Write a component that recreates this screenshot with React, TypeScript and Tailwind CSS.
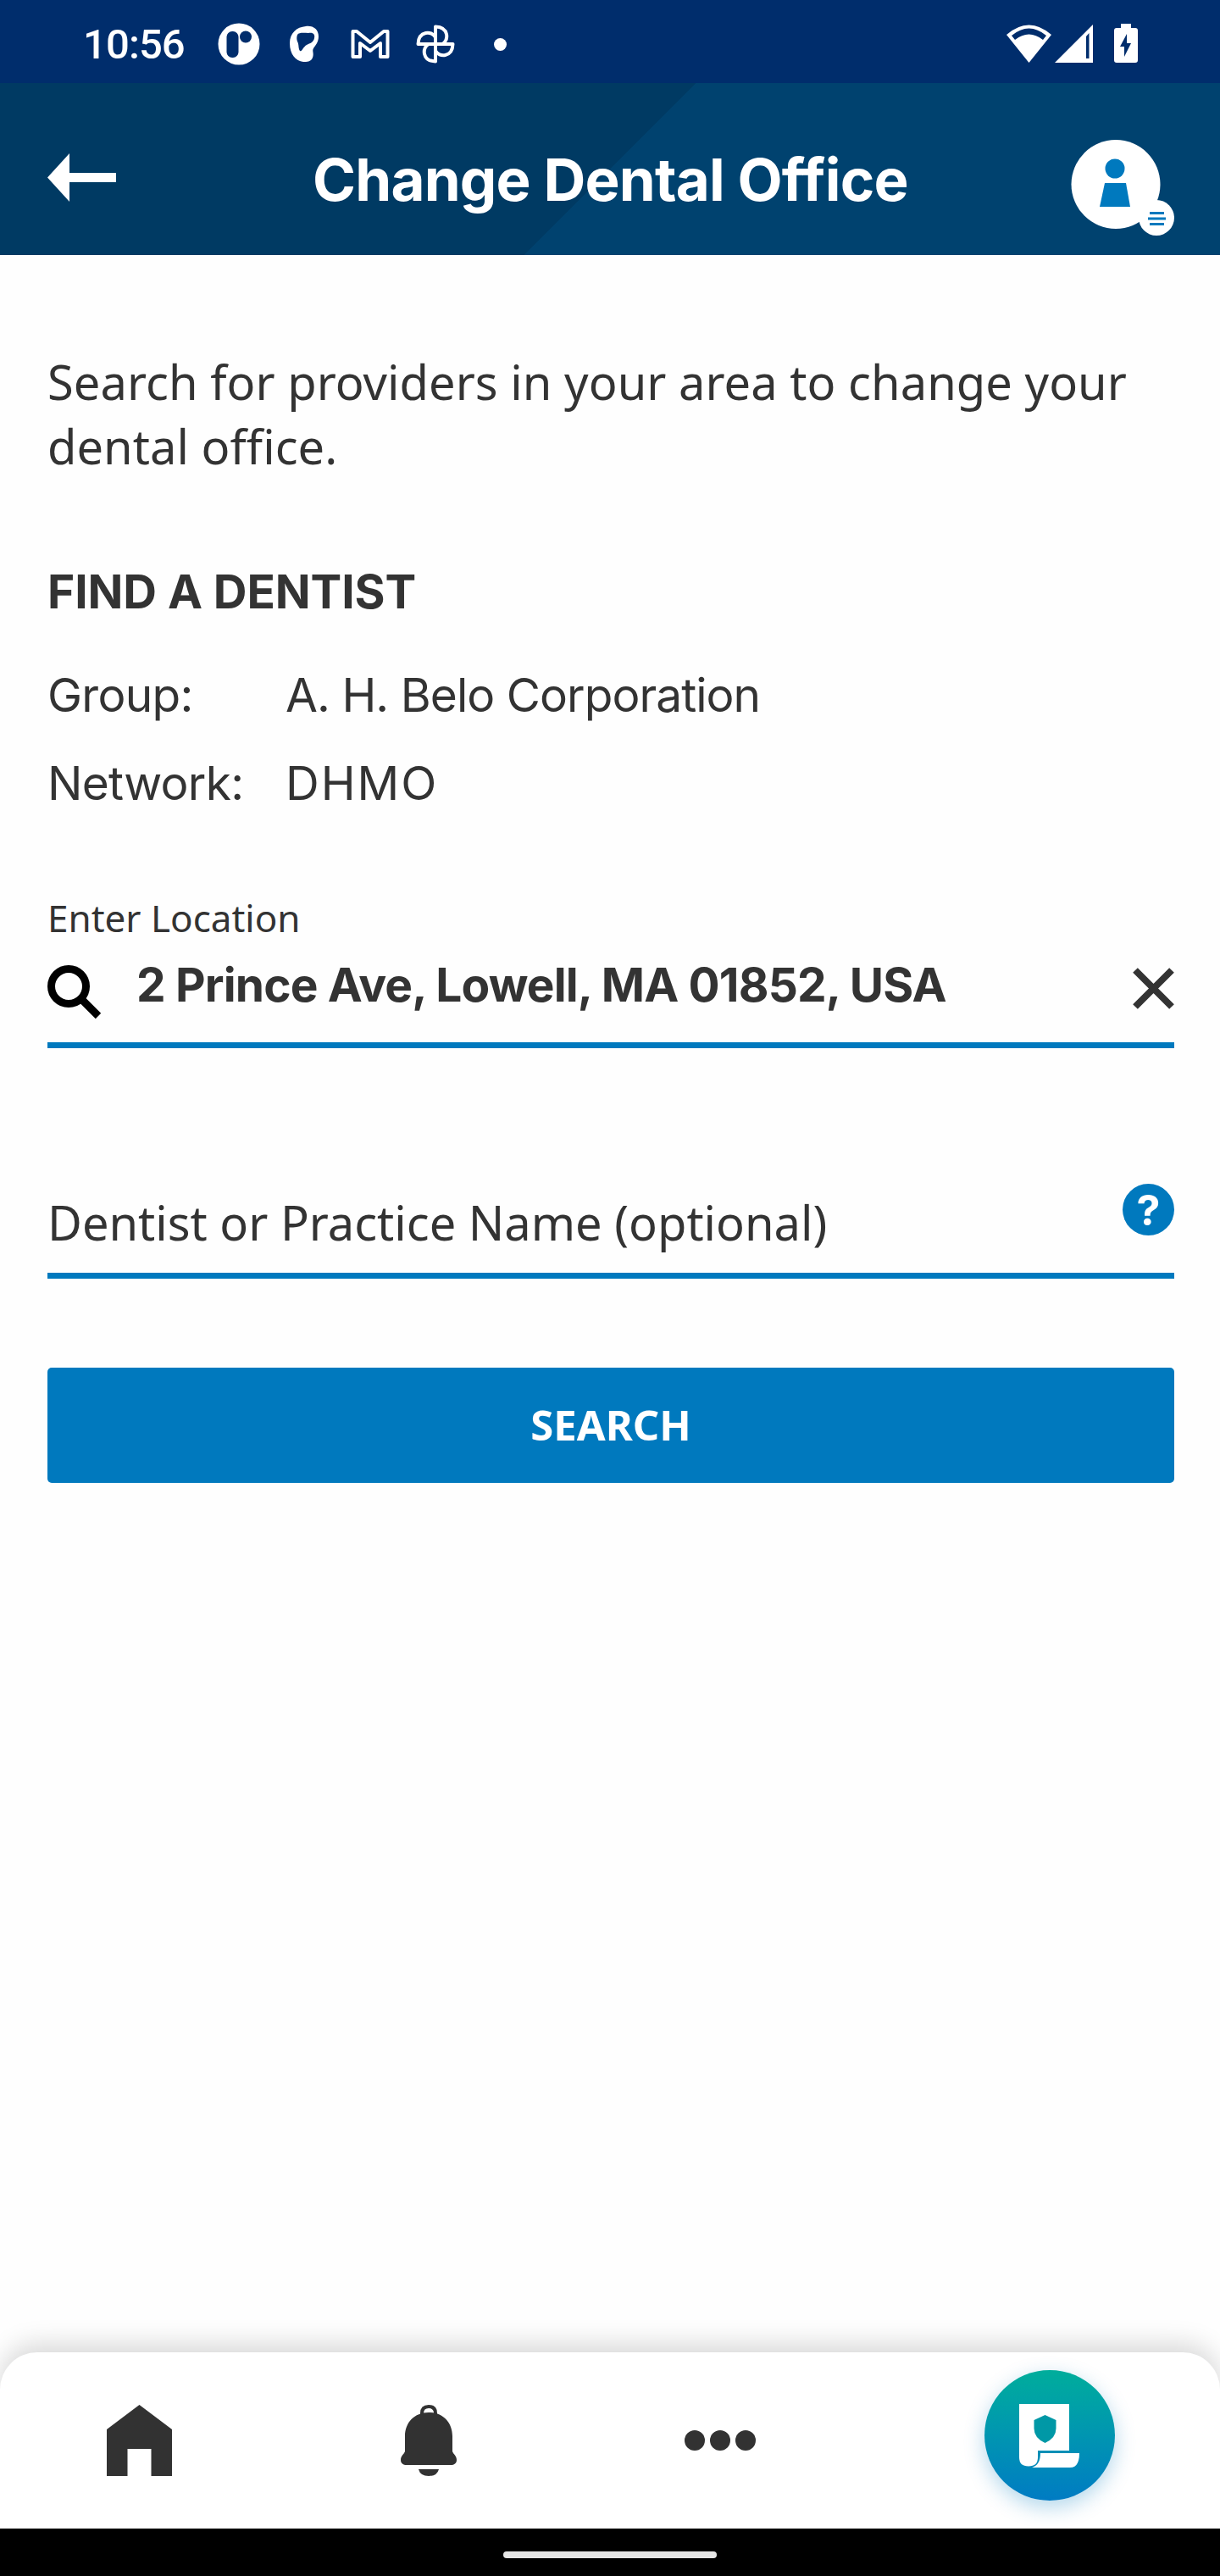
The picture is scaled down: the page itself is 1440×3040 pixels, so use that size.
import React from "react";

function StatusBar() {
  return (
    <div className="flex h-[98px] items-center justify-between bg-[#002d6c] text-white">
      <div className="flex items-center pl-[98px] pt-[6px]">
        <span className="w-[120px] whitespace-nowrap font-['Roboto'] text-[49px] font-medium leading-none tracking-[-0.9px]">10:56</span>
        <svg className="ml-[39px]" width="50" height="50" viewBox="0 0 50 50">
          <circle cx="25" cy="25" r="24.5" fill="#fff" />
          <rect x="10.500" y="10" width="14" height="31" rx="6.500" fill="#002d6c" />
          <circle cx="33" cy="16.500" r="7" fill="#002d6c" />
        </svg>
        <svg className="ml-[34px]" width="36" height="44" viewBox="0 0 36 44">
          <path d="M20 1C29 0 35 5 35 13C35 20 31 24 29 27C27 30 30 33 28 38C26 43 21 43 17 43C8 42 1 34 1 21C1 9 9 2 20 1Z" fill="#fff" />
          <path d="M10 11C12 8 18 9 23 9C29 8 31 11 30 15C29 20 25 21 21 23C17 25 15 32 13 30C11 28 12 22 10 19C9 16 9 14 10 11Z" fill="#002d6c" />
        </svg>
        <svg className="ml-[37px]" width="46" height="36" viewBox="0 0 46 36" fill="none" stroke="#fff" strokeWidth="4" strokeLinejoin="round">
          <path d="M2.500 33V3H7L23 16L39 3H43.500V33H35V17L23 26L11 17V33Z" />
        </svg>
        <svg className="ml-[31px]" width="46" height="46" viewBox="0 0 46 46" fill="none" stroke="#fff" strokeWidth="4" strokeLinejoin="round">
          <path d="M23 23V2.500C39 3 39 19 31 23M23 23H43.500C43 39 27 39 23 31M23 23V43.500C7 43 7 27 15 23M23 23H2.500C3 7 19 7 23 15" />
        </svg>
        <span className="ml-[46px] h-[15px] w-[15px] rounded-full bg-white" />
      </div>
      <div className="flex items-center pr-[97px] pt-[4px]">
        <svg width="53" height="45" viewBox="0 0 53 45">
          <path d="M0 12Q26.500 -11 53 12L26.500 45Z" fill="#fff" />
          <path d="M6 13Q26.500 -4 47 13L43 18Q26.500 5 10 18Z" fill="#002d6c" />
        </svg>
        <svg className="ml-[4px]" width="45" height="45" viewBox="0 0 45 45">
          <path d="M45 0V45H0Z" fill="#fff" />
          <path d="M37 14L40.500 10V40H37Z" fill="#002d6c" />
        </svg>
        <svg className="ml-[25px]" width="28" height="46" viewBox="0 0 28 46">
          <path d="M8 0H20V5H25Q28 5 28 8V43Q28 46 25 46H3Q0 46 0 43V8Q0 5 3 5H8Z" fill="#fff" />
          <path d="M15 12V23H20L12 39V27H7Z" fill="#002d6c" />
        </svg>
      </div>
    </div>
  );
}

function Header() {
  return (
    <header className="flex h-[203px] bg-[linear-gradient(135deg,#003a63_0%,#003a63_50%,#00426f_50%,#00426f_100%)] pl-14 pr-[54px] text-white">
      <svg className="mt-[83px]" width="82" height="57" viewBox="0 0 82 57" fill="#fff">
        <path d="M0 28.500L26 0V23H81V34H26V57Z" />
      </svg>
      <h1 className="ml-[231px] mt-[72px] whitespace-nowrap font-['Inter'] text-[69px] font-bold leading-[84px] tracking-[-0.8px]">Change Dental Office</h1>
      <svg className="ml-auto mt-[67px]" width="122" height="113" viewBox="0 0 122 113">
        <circle cx="53" cy="52.500" r="52.500" fill="#fff" />
        <circle cx="52" cy="34" r="11.500" fill="#0079be" />
        <path d="M40 51H65L70 79H34Z" fill="#0079be" />
        <circle cx="101" cy="92" r="21" fill="#fff" />
        <path d="M93 86.500H110M91 93H112M93 99.500H110" stroke="#0079be" strokeWidth="3" />
      </svg>
    </header>
  );
}

function BottomNav() {
  return (
    <nav className="flex h-[208px] rounded-t-[44px] bg-white shadow-[0_-10px_30px_rgba(0,0,0,0.15)]">
      <svg className="ml-[126px] mt-[62px]" width="77" height="84" viewBox="0 0 77 84" fill="#323232">
        <path d="M38.500 0L77 29V84H52.500V52H24.500V84H0V29Z" />
      </svg>
      <svg className="ml-[270px] mt-[62px]" width="66" height="84" viewBox="0 0 66 84" fill="#323232">
        <path d="M25 13V10Q25 2 33 2Q41 2 41 10V13" fill="none" stroke="#323232" strokeWidth="4" />
        <path d="M33 9C50 9 61 21 61 37V55C62 58 66 60 66 65C66 69 63 71 59 71H7C3 71 0 69 0 65C0 60 4 58 5 55V37C5 21 16 9 33 9Z" />
        <path d="M28 9Q28 5 33 5Q38 5 38 9Z" fill="#fff" />
        <path d="M21 76H45Q43 84 33 84Q23 84 21 76Z" />
      </svg>
      <div className="ml-[269px] mt-[92px] flex gap-[6px]">
        <span className="h-6 w-6 rounded-full bg-[#323232]" />
        <span className="h-6 w-6 rounded-full bg-[#323232]" />
        <span className="h-6 w-6 rounded-full bg-[#323232]" />
      </div>
      <button className="ml-[270px] mt-[21px] flex h-[154px] w-[154px] items-center justify-center rounded-full bg-linear-to-b from-[#00ad9b] to-[#007bc3] shadow-[0_8px_24px_rgba(0,121,190,0.3)]">
        <svg width="72" height="75" viewBox="0 0 72 75" fill="#fff">
          <path d="M0 0H59V55H22V63Q22 73.500 11 73.500Q0 73.500 0 63Z" />
          <path d="M30.500 13L43.500 19V29Q43.500 40 30.500 46Q17.500 40 17.500 29V19Z" fill="#0098a6" />
          <path d="M25 58H71Q71 75 60 75H15Q25 72 25 58Z" />
        </svg>
      </button>
    </nav>
  );
}

export default function App() {
  return (
    <div className="flex h-[3040px] w-[1440px] flex-col overflow-hidden bg-[#fefefe] text-[#333]">
      <StatusBar />
      <Header />
      <main className="flex grow flex-col px-14 pr-[54px] font-['Noto_Sans']">
        <p className="mt-[111px] whitespace-nowrap text-[56px] leading-[76px] tracking-[0.05px]">
          Search for providers in your area to change your<br />dental office.
        </p>
        <h2 className="mt-[96px] h-[76px] whitespace-nowrap font-['Inter'] text-[55px] font-bold leading-[76px] tracking-[-0.1px]">FIND A DENTIST</h2>
        <dl className="mt-[32px] grid auto-rows-[104px] grid-cols-[281px_auto] items-center whitespace-nowrap font-['Inter'] text-[55px]">
          <dt className="tracking-[-0.7px]">Group:</dt>
          <dd className="tracking-[-0.95px]">A. H. Belo Corporation</dd>
          <dt className="tracking-[-0.7px]">Network:</dt>
          <dd className="tracking-[2px]">DHMO</dd>
        </dl>
        <label className="mt-[77px] text-[44px] leading-[60px]">Enter Location</label>
        <div className="mt-[17px] flex h-[107px] items-start border-b-[7px] border-[#0079be]">
          <svg className="mt-[9px]" width="64" height="64" viewBox="0 0 64 64" fill="none" stroke="#000" strokeWidth="9">
            <circle cx="25" cy="25" r="20.500" />
            <path d="M39 39L60 60" />
          </svg>
          <span className="ml-[41px] mt-[2px] whitespace-nowrap font-['Inter'] text-[55px] font-bold leading-[60px] tracking-[-0.85px]">2 Prince Ave, Lowell, MA 01852, USA</span>
          <svg className="ml-auto mt-[12px]" width="49" height="49" viewBox="0 0 49 49" stroke="#333" strokeWidth="8">
            <path d="M3 3L46 46M46 3L3 46" />
          </svg>
        </div>
        <div className="mt-[160px] flex h-[112px] items-start justify-between border-b-[7px] border-[#0079be]">
          <span className="mt-[7px] whitespace-nowrap text-[56px] leading-[76px]">Dentist or Practice Name (optional)</span>
          <span className="flex h-[61px] w-[61px] items-center justify-center rounded-full bg-[#0079be] font-['Inter'] text-[50px] font-bold leading-none text-white">?</span>
        </div>
        <button className="mt-[105px] h-[136px] rounded-[5px] bg-[#0079be] text-[49px] font-bold text-white">SEARCH</button>
      </main>
      <BottomNav />
      <div className="flex h-[56px] shrink-0 justify-center bg-black pt-[27px]">
        <span className="h-[8px] w-[252px] rounded-full bg-[#e6e6e6]" />
      </div>
    </div>
  );
}
